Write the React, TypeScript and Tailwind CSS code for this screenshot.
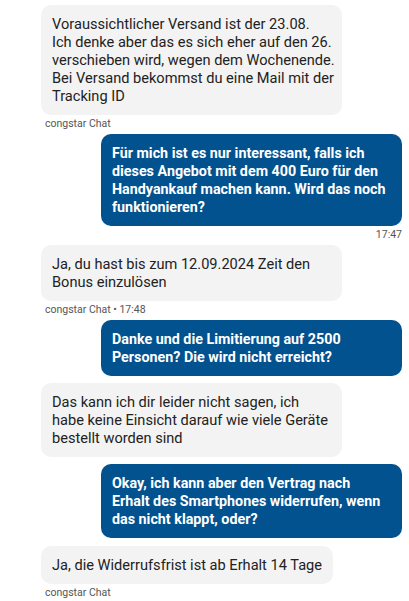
import React from "react";

type Msg = {
  from: "bot" | "user";
  lines: string[];
  meta?: string;
  mt: number;
};

const msgs: Msg[] = [
  {
    from: "bot",
    lines: [
      "Voraussichtlicher Versand ist der 23.08.",
      "Ich denke aber das es sich eher auf den 26.",
      "verschieben wird, wegen dem Wochenende.",
      "Bei Versand bekommst du eine Mail mit der",
      "Tracking ID",
    ],
    meta: "congstar Chat",
    mt: 5,
  },
  {
    from: "user",
    lines: [
      "Für mich ist es nur interessant, falls ich",
      "dieses Angebot mit dem 400 Euro für den",
      "Handyankauf machen kann. Wird das noch",
      "funktionieren?",
    ],
    meta: "17:47",
    mt: 3,
  },
  {
    from: "bot",
    lines: ["Ja, du hast bis zum 12.09.2024 Zeit den", "Bonus einzulösen"],
    meta: "congstar Chat • 17:48",
    mt: 3,
  },
  {
    from: "user",
    lines: ["Danke und die Limitierung auf 2500", "Personen? Die wird nicht erreicht?"],
    mt: 3,
  },
  {
    from: "bot",
    lines: [
      "Das kann ich dir leider nicht sagen, ich",
      "habe keine Einsicht darauf wie viele Geräte",
      "bestellt worden sind",
    ],
    mt: 7,
  },
  {
    from: "user",
    lines: [
      "Okay, ich kann aber den Vertrag nach",
      "Erhalt des Smartphones widerrufen, wenn",
      "das nicht klappt, oder?",
    ],
    mt: 7,
  },
  {
    from: "bot",
    lines: ["Ja, die Widerrufsfrist ist ab Erhalt 14 Tage"],
    meta: "congstar Chat",
    mt: 8,
  },
];

export default function App() {
  return (
    <div
      className="w-[409px] h-[601px] overflow-hidden bg-white flex flex-col"
      style={{ fontFamily: "Roboto, 'Noto Sans', sans-serif" }}
    >
      {msgs.map((m, i) => {
        const isUser = m.from === "user";
        const multi = m.lines.length > 1;
        return (
          <div
            key={i}
            className={
              isUser
                ? "flex flex-col items-end pr-[7px]"
                : "flex flex-col items-start pl-[41px]"
            }
            style={{ marginTop: m.mt }}
          >
            <div
              className={
                isUser
                  ? "w-[301px] rounded-[10px] bg-[#02528f] text-white font-bold text-[14.3px] leading-[18px] px-[11px] py-[10px]"
                  : multi
                  ? "w-[301px] rounded-[10px] bg-[#f3f3f3] text-[#222] text-[14.6px] leading-[18px] px-[11px] py-[10px]"
                  : "max-w-[301px] rounded-[10px] bg-[#f3f3f3] text-[#222] text-[14.6px] leading-[18px] px-[11px] py-[10px]"
              }
            >
              {m.lines.map((l, j) => (
                <div key={j} className="whitespace-nowrap">
                  {l}
                </div>
              ))}
            </div>
            {m.meta && (
              <div
                className={
                  isUser
                    ? "mt-[2px] text-[10.5px] leading-[14px] text-[#555]"
                    : "mt-[2px] pl-[4px] text-[10.5px] leading-[14px] text-[#555]"
                }
              >
                {m.meta}
              </div>
            )}
          </div>
        );
      })}
    </div>
  );
}
